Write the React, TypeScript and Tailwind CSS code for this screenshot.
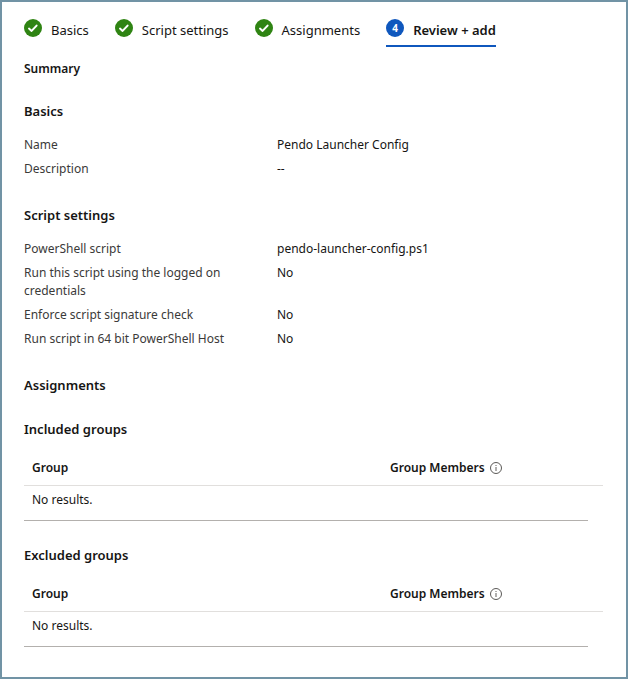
type Field = { label: string; value: string };

const font = "font-['Noto_Sans','Segoe_UI',sans-serif]";

const steps = [
  { label: "Basics", done: true },
  { label: "Script settings", done: true },
  { label: "Assignments", done: true },
  { label: "Review + add", done: false },
];

const basics: Field[] = [
  { label: "Name", value: "Pendo Launcher Config" },
  { label: "Description", value: "--" },
];

const scriptSettings: Field[] = [
  { label: "PowerShell script", value: "pendo-launcher-config.ps1" },
  { label: "Run this script using the logged on credentials", value: "No" },
  { label: "Enforce script signature check", value: "No" },
  { label: "Run script in 64 bit PowerShell Host", value: "No" },
];

const CheckBadge = () => (
  <svg viewBox="0 0 18 18" className="mb-1 size-[18px]" aria-hidden="true">
    <circle cx="9" cy="9" r="9" fill="#2f8413" />
    <path
      d="M5 9.6l2.6 2.3 5-5.3"
      fill="none"
      stroke="#fff"
      strokeWidth="2"
      strokeLinecap="round"
      strokeLinejoin="round"
    />
  </svg>
);

const InfoIcon = () => (
  <svg viewBox="0 0 12 12" className="size-3" aria-hidden="true">
    <circle cx="6" cy="6" r="5.5" fill="none" stroke="#484644" strokeWidth="0.9" />
    <path d="M6 5v4" stroke="#605e5c" strokeWidth="1" />
    <path d="M6 3v1" stroke="#605e5c" strokeWidth="1" />
  </svg>
);

const Steps = () => (
  <div role="tablist" className="flex gap-[26px] text-[13px] leading-[18px]">
    {steps.map((step, i) => (
      <button
        key={step.label}
        type="button"
        role="tab"
        aria-selected={!step.done}
        className={`flex items-center gap-[9px] border-b-2 pb-1 whitespace-nowrap ${
          step.done ? "border-transparent" : "border-[#0f57bd] font-semibold"
        }`}
      >
        {step.done ? (
          <CheckBadge />
        ) : (
          <span className="mb-1 flex size-[18px] items-center justify-center rounded-full bg-[#0f57bd] text-[10px] font-bold text-white">
            {i + 1}
          </span>
        )}
        <span>{step.label}</span>
      </button>
    ))}
  </div>
);

const FieldSection = ({ title, fields }: { title: string; fields: Field[] }) => (
  <section className="mb-7">
    <h3 className="mb-4 text-[13px] leading-[18px] font-semibold">{title}</h3>
    <dl className="flex flex-col gap-1.5">
      {fields.map((field) => (
        <div key={field.label} className="flex">
          <dt className="w-[253px] shrink-0 pr-7 text-[#3b3a39]">{field.label}</dt>
          <dd>{field.value}</dd>
        </div>
      ))}
    </dl>
  </section>
);

const GroupTable = ({ title }: { title: string }) => (
  <section className="mb-[25px]">
    <h4 className="mb-[21px] text-[13px] leading-[18px] font-semibold">{title}</h4>
    <table aria-label={title} className="w-full table-fixed border-collapse text-left">
      <thead>
        <tr className="border-b border-[#e1dfdd]">
          <th className="px-2 pb-2 font-semibold">Group</th>
          <th className="w-[221px] px-2 pb-2 font-semibold">
            <span className="flex items-center gap-[5px]">
              Group Members
              <InfoIcon />
            </span>
          </th>
        </tr>
      </thead>
      <tbody>
        <tr>
          <td colSpan={2} className="px-2 pt-[5px] pb-[11px]">
            No results.
          </td>
        </tr>
      </tbody>
    </table>
    <div className="mr-[15px] border-b border-[#b3b0ad]" />
  </section>
);

export default function App() {
  return (
    <main
      className={`min-h-screen border-2 border-[#7193a5] bg-white pt-[17px] pr-[23px] pl-[22px] text-xs leading-[18px] text-[#161514] ${font}`}
    >
      <Steps />
      <h2 className="mt-[13px] mb-6 font-semibold">Summary</h2>
      <FieldSection title="Basics" fields={basics} />
      <FieldSection title="Script settings" fields={scriptSettings} />
      <h3 className="mb-[26px] text-[13px] leading-[18px] font-semibold">Assignments</h3>
      <GroupTable title="Included groups" />
      <GroupTable title="Excluded groups" />
    </main>
  );
}
